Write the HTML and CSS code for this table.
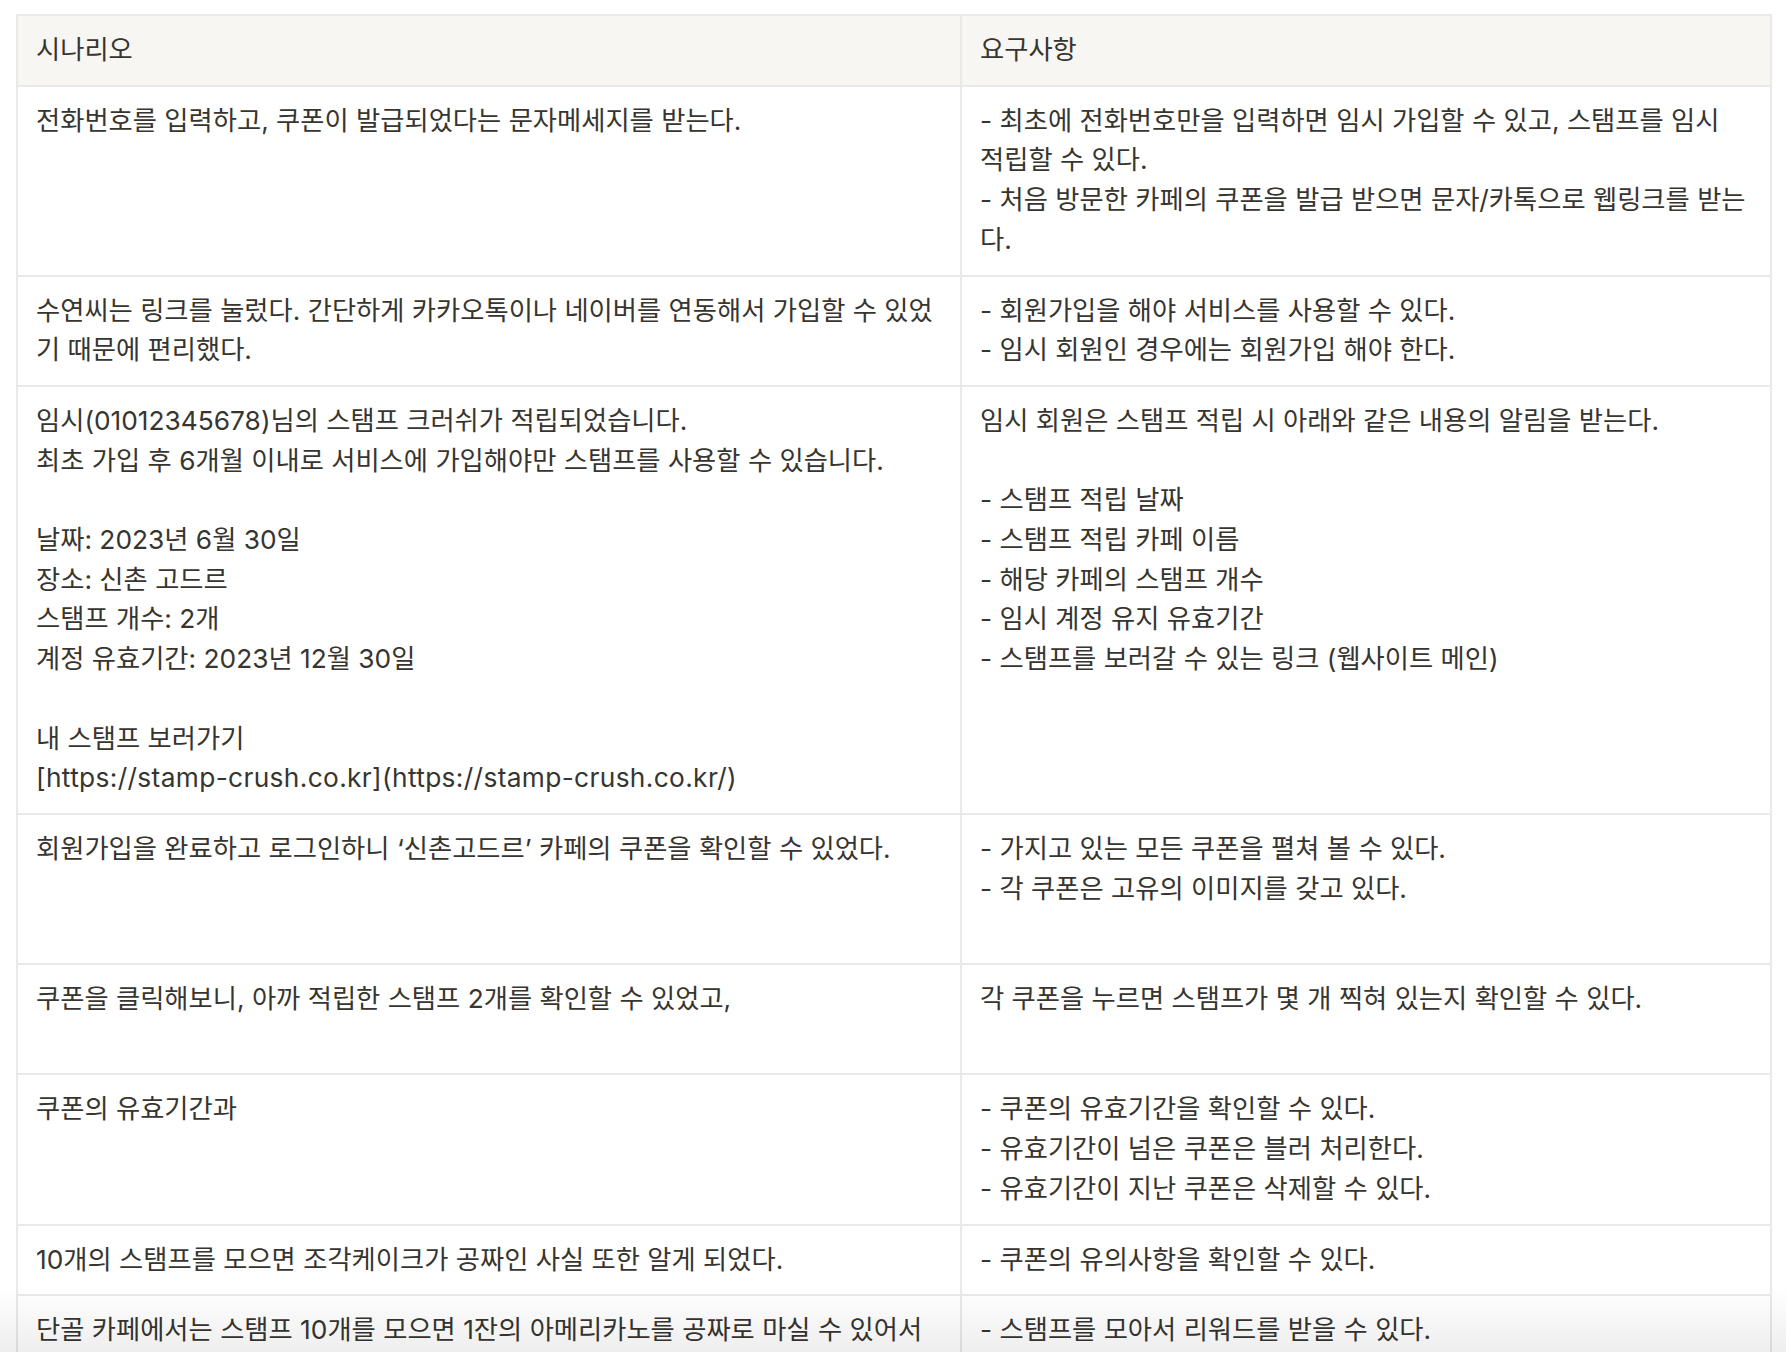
FILE: index.html
```html
<!DOCTYPE html>
<html lang="ko">
<head>
<meta charset="utf-8">
<title>시나리오 / 요구사항</title>
<link rel="stylesheet" href="styles.css">
</head>
<body>
<table class="spec">
  <colgroup>
    <col class="col-scenario">
    <col class="col-req">
  </colgroup>
  <thead>
    <tr>
      <th>시나리오</th>
      <th>요구사항</th>
    </tr>
  </thead>
  <tbody>
    <tr>
      <td>전화번호를 입력하고, 쿠폰이 발급되었다는 문자메세지를 받는다.</td>
      <td>- 최초에 전화번호만을 입력하면 임시 가입할 수 있고, 스탬프를 임시<br>적립할 수 있다.<br>- 처음 방문한 카페의 쿠폰을 발급 받으면 문자/카톡으로 웹링크를 받는<br>다.</td>
    </tr>
    <tr>
      <td>수연씨는 링크를 눌렀다. 간단하게 카카오톡이나 네이버를 연동해서 가입할 수 있었<br>기 때문에 편리했다.</td>
      <td>- 회원가입을 해야 서비스를 사용할 수 있다.<br>- 임시 회원인 경우에는 회원가입 해야 한다.</td>
    </tr>
    <tr>
      <td>임시(01012345678)님의 스탬프 크러쉬가 적립되었습니다.<br>최초 가입 후 6개월 이내로 서비스에 가입해야만 스탬프를 사용할 수 있습니다.<br><br>날짜: 2023년 6월 30일<br>장소: 신촌 고드르<br>스탬프 개수: 2개<br>계정 유효기간: 2023년 12월 30일<br><br>내 스탬프 보러가기<br><span class="url">[https://stamp-crush.co.kr](https://stamp-crush.co.kr/)</span></td>
      <td>임시 회원은 스탬프 적립 시 아래와 같은 내용의 알림을 받는다.<br><br>- 스탬프 적립 날짜<br>- 스탬프 적립 카페 이름<br>- 해당 카페의 스탬프 개수<br>- 임시 계정 유지 유효기간<br>- 스탬프를 보러갈 수 있는 링크 (웹사이트 메인)</td>
    </tr>
    <tr>
      <td>회원가입을 완료하고 로그인하니 ‘신촌고드르’ 카페의 쿠폰을 확인할 수 있었다.<br><br><br></td>
      <td>- 가지고 있는 모든 쿠폰을 펼쳐 볼 수 있다.<br>- 각 쿠폰은 고유의 이미지를 갖고 있다.</td>
    </tr>
    <tr>
      <td>쿠폰을 클릭해보니, 아까 적립한 스탬프 2개를 확인할 수 있었고,<br><br></td>
      <td>각 쿠폰을 누르면 스탬프가 몇 개 찍혀 있는지 확인할 수 있다.</td>
    </tr>
    <tr>
      <td>쿠폰의 유효기간과</td>
      <td>- 쿠폰의 유효기간을 확인할 수 있다.<br>- 유효기간이 넘은 쿠폰은 블러 처리한다.<br>- 유효기간이 지난 쿠폰은 삭제할 수 있다.</td>
    </tr>
    <tr>
      <td>10개의 스탬프를 모으면 조각케이크가 공짜인 사실 또한 알게 되었다.</td>
      <td>- 쿠폰의 유의사항을 확인할 수 있다.</td>
    </tr>
    <tr>
      <td>단골 카페에서는 스탬프 10개를 모으면 1잔의 아메리카노를 공짜로 마실 수 있어서<br>좋았다.</td>
      <td>- 스탬프를 모아서 리워드를 받을 수 있다.</td>
    </tr>
  </tbody>
</table>
<div class="fade"></div>
</body>
</html>
```

FILE: styles.css
```css
html, body {
  margin: 0;
  padding: 0;
  background: #ffffff;
}
body {
  padding: 14px 0 0 16px;
  font-family: Inter, "Noto Sans CJK KR", sans-serif;
  font-size: 26.3px;
  color: #37352f;
  overflow: hidden;
  height: 1352px;
  box-sizing: border-box;
}
.spec {
  width: 1756px;
  table-layout: fixed;
  border-collapse: separate;
  border-spacing: 0;
  border-top: 2px solid #e9e9e7;
  border-left: 2px solid #e9e9e7;
}
.col-scenario { width: 944px; }
.col-req { width: 810px; }
.spec th,
.spec td {
  text-align: left;
  vertical-align: top;
  font-weight: 400;
  line-height: 39.7px;
  padding: 14px 10px 15px 18px;
  border-right: 2px solid #e9e9e7;
  border-bottom: 2px solid #e9e9e7;
  white-space: nowrap;
  overflow: visible;
}
.spec th {
  background: #f7f6f3;
}
.url {
  letter-spacing: 0.35px;
}
.fade {
  position: fixed;
  left: 0;
  right: 0;
  bottom: 0;
  height: 64px;
  background: linear-gradient(to bottom, rgba(0,0,0,0) 0%, rgba(0,0,0,0.065) 100%);
  pointer-events: none;
}
```
